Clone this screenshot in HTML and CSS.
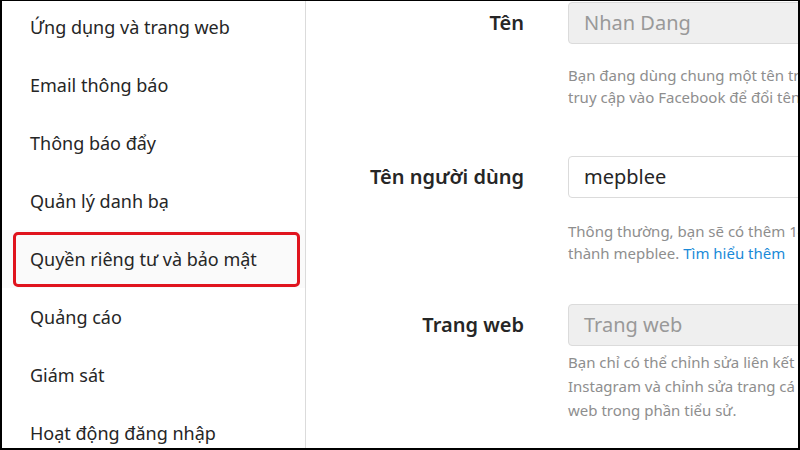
FILE: index.html
```html
<!DOCTYPE html>
<html lang="vi">
<head>
<meta charset="utf-8">
<link rel="stylesheet" href="styles.css">
</head>
<body>
<div class="frame">
  <nav class="sidebar">
    <div class="item">Ứng dụng và trang web</div>
    <div class="item">Email thông báo</div>
    <div class="item">Thông báo đẩy</div>
    <div class="item">Quản lý danh bạ</div>
    <div class="item active"><span class="hl"></span>Quyền riêng tư và bảo mật</div>
    <div class="item">Quảng cáo</div>
    <div class="item">Giám sát</div>
    <div class="item">Hoạt động đăng nhập</div>
  </nav>
  <main class="main">
    <div class="row r1">
      <label class="label">Tên</label>
      <div class="field">
        <div class="input disabled">Nhan Dang</div>
        <p class="help">Bạn đang dùng chung một tên trên Instagram và Facebook. Hãy<br>truy cập vào Facebook để đổi tên của bạn.</p>
      </div>
    </div>
    <div class="row r2">
      <label class="label">Tên người dùng</label>
      <div class="field">
        <div class="input">mepblee</div>
        <p class="help help-r2">Thông thường, bạn sẽ có thêm 14 ngày để đổi tên người dùng trở lại<br>thành mepblee. <a class="link">Tìm hiểu thêm</a></p>
      </div>
    </div>
    <div class="row r3">
      <label class="label">Trang web</label>
      <div class="field">
        <div class="input disabled">Trang web</div>
        <p class="help help-tight">Bạn chỉ có thể chỉnh sửa liên kết trên thiết bị di động. Hãy truy cập ứng dụng<br>Instagram và chỉnh sửa trang cá nhân để thay đổi các trang<br>web trong phần tiểu sử.</p>
      </div>
    </div>
  </main>
</div>
</body>
</html>
```
FILE: styles.css
```css
* { box-sizing: border-box; }
html, body { margin: 0; padding: 0; }
body {
  width: 800px;
  height: 450px;
  overflow: hidden;
  font-family: "Noto Sans", "Open Sans", sans-serif;
  color: #262626;
  background: #fff;
}
.frame {
  width: 800px;
  height: 450px;
  border-style: solid;
  border-color: #000;
  border-width: 1px 2px 2px 2px;
  display: flex;
  overflow: hidden;
}
.sidebar {
  width: 304px;
  flex: none;
  border-right: 1px solid #dbdbdb;
  padding-top: 0;
}
.sidebar .item:first-child { margin-top: -3px; }
.item {
  position: relative;
  height: 58px;
  display: flex;
  align-items: center;
  padding-left: 28px;
  font-size: 18px;
  color: #262626;
}
.item.active {
  background: #fafafa;
}
.hl {
  position: absolute;
  left: 11px;
  right: 5px;
  top: 2px;
  bottom: 1px;
  border: 3px solid #e0141e;
  border-radius: 5px;
}
.main {
  flex: 1;
  min-width: 0;
  overflow: hidden;
}
.row {
  display: grid;
  grid-template-columns: 218px 1fr;
  column-gap: 44px;
}
.r1 { margin-top: 1px; }
.r2 { margin-top: 48px; }
.r3 { margin-top: 40px; }
.label {
  text-align: right;
  font-weight: 600;
  font-size: 20px;
  line-height: 42px;
  color: #262626;
}
.field { min-width: 0; }
.input {
  width: 320px;
  height: 42px;
  border: 1px solid #dbdbdb;
  border-radius: 4px;
  padding-left: 15px;
  font-size: 20px;
  line-height: 40px;
  color: #262626;
  background: #fff;
  white-space: nowrap;
}
.input.disabled {
  background: #efefef;
  color: #999;
}
.help {
  margin: 20px 0 0 0;
  font-size: 15px;
  line-height: 22px;
  color: #8e8e8e;
  white-space: nowrap;
}
.help-r2 { margin-top: 22px; }
.help-tight {
  margin-top: 4px;
  line-height: 24px;
}
.link { color: #1a8ad8; }
```
